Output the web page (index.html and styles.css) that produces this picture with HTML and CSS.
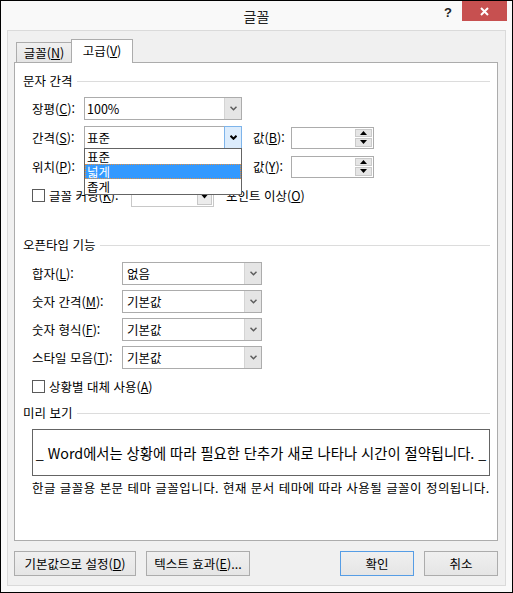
FILE: index.html
```html
<!DOCTYPE html>
<html lang="ko">
<head>
    <meta charset="UTF-8">
    <meta name="viewport" content="width=device-width, initial-scale=1.0">
    <title>글꼴</title>
    <link rel="stylesheet" href="styles.css">
</head>
<body>
    <div class="dialog">
        <div class="titlebar">
            <span class="title">글꼴</span>
            <div class="caption-buttons">
                <span class="help">?</span>
                <span class="close">
                    <svg width="9" height="9" viewBox="0 0 9 9"><path d="M1 1 L8 8 M8 1 L1 8" stroke="#fff" stroke-width="2"/></svg>
                </span>
            </div>
        </div>

        <div class="frame">
            <div class="tabs">
                <div class="tab">글꼴(<u>N</u>)</div>
                <div class="tab active">고급(<u>V</u>)</div>
            </div>

            <div class="page">
                <!-- 문자 간격 -->
                <div class="group-title">문자 간격</div>
                <div class="group">
                    <div class="row">
                        <span class="lbl">장평(<u>C</u>):</span>
                        <div class="combo">
                            <span class="value">100%</span>
                            <span class="drop">
                                <svg width="7" height="5" viewBox="0 0 7 5"><path d="M0.5 0.8 L3.5 3.8 L6.5 0.8" fill="none" stroke="#5c5c5c" stroke-width="1.5"/></svg>
                            </span>
                        </div>
                    </div>
                    <div class="row">
                        <span class="lbl">간격(<u>S</u>):</span>
                        <div class="combo open">
                            <span class="value">표준</span>
                            <span class="drop">
                                <svg width="7" height="5" viewBox="0 0 7 5"><path d="M0.5 0.8 L3.5 3.8 L6.5 0.8" fill="none" stroke="#000" stroke-width="2"/></svg>
                            </span>
                            <ul class="list">
                                <li>표준</li>
                                <li class="selected">넓게</li>
                                <li>좁게</li>
                            </ul>
                        </div>
                        <span class="lbl value-lbl">값(<u>B</u>):</span>
                        <div class="spin">
                            <div class="spin-btns">
                                <span><svg width="7" height="4" viewBox="0 0 7 4"><path d="M0 4 L3.5 0 L7 4 Z" fill="#000"/></svg></span>
                                <span><svg width="7" height="4" viewBox="0 0 7 4"><path d="M0 0 L3.5 4 L7 0 Z" fill="#000"/></svg></span>
                            </div>
                        </div>
                    </div>
                    <div class="row">
                        <span class="lbl">위치(<u>P</u>):</span>
                        <div class="combo">
                            <span class="value">표준</span>
                            <span class="drop"></span>
                        </div>
                        <span class="lbl value-lbl">값(<u>Y</u>):</span>
                        <div class="spin">
                            <div class="spin-btns">
                                <span><svg width="7" height="4" viewBox="0 0 7 4"><path d="M0 4 L3.5 0 L7 4 Z" fill="#000"/></svg></span>
                                <span><svg width="7" height="4" viewBox="0 0 7 4"><path d="M0 0 L3.5 4 L7 0 Z" fill="#000"/></svg></span>
                            </div>
                        </div>
                    </div>
                    <div class="row">
                        <span class="checkbox"></span>
                        <span class="kern-lbl">글꼴 커닝(<u>K</u>):</span>
                        <div class="combo small">
                            <span class="value"></span>
                            <span class="drop">
                                <svg width="7" height="4" viewBox="0 0 7 4"><path d="M0.5 0 L3.5 3.5 L6.5 0 Z" fill="#000"/></svg>
                            </span>
                        </div>
                        <span class="after-lbl">포인트 이상(<u>O</u>)</span>
                    </div>
                </div>

                <!-- 오픈타입 기능 -->
                <div class="group-title second">오픈타입 기능</div>
                <div class="group wide">
                    <div class="row">
                        <span class="lbl">합자(<u>L</u>):</span>
                        <div class="combo">
                            <span class="value">없음</span>
                            <span class="drop"><svg width="7" height="5" viewBox="0 0 7 5"><path d="M0.5 0.8 L3.5 3.8 L6.5 0.8" fill="none" stroke="#5c5c5c" stroke-width="1.5"/></svg></span>
                        </div>
                    </div>
                    <div class="row">
                        <span class="lbl">숫자 간격(<u>M</u>):</span>
                        <div class="combo">
                            <span class="value">기본값</span>
                            <span class="drop"><svg width="7" height="5" viewBox="0 0 7 5"><path d="M0.5 0.8 L3.5 3.8 L6.5 0.8" fill="none" stroke="#5c5c5c" stroke-width="1.5"/></svg></span>
                        </div>
                    </div>
                    <div class="row">
                        <span class="lbl">숫자 형식(<u>F</u>):</span>
                        <div class="combo">
                            <span class="value">기본값</span>
                            <span class="drop"><svg width="7" height="5" viewBox="0 0 7 5"><path d="M0.5 0.8 L3.5 3.8 L6.5 0.8" fill="none" stroke="#5c5c5c" stroke-width="1.5"/></svg></span>
                        </div>
                    </div>
                    <div class="row">
                        <span class="lbl">스타일 모음(<u>T</u>):</span>
                        <div class="combo">
                            <span class="value">기본값</span>
                            <span class="drop"><svg width="7" height="5" viewBox="0 0 7 5"><path d="M0.5 0.8 L3.5 3.8 L6.5 0.8" fill="none" stroke="#5c5c5c" stroke-width="1.5"/></svg></span>
                        </div>
                    </div>
                    <div class="check-row">
                        <span class="checkbox"></span>
                        <span>상황별 대체 사용(<u>A</u>)</span>
                    </div>
                </div>

                <!-- 미리 보기 -->
                <div class="group-title third">미리 보기</div>
                <div class="preview">_ Word에서는 상황에 따라 필요한 단추가 새로 나타나 시간이 절약됩니다. _</div>
                <p class="note">한글 글꼴용 본문 테마 글꼴입니다. 현재 문서 테마에 따라 사용될 글꼴이 정의됩니다.</p>
            </div>

            <div class="footer">
                <button class="btn btn-reset">기본값으로 설정(<u>D</u>)</button>
                <button class="btn btn-effects">텍스트 효과(<u>E</u>)...</button>
                <button class="btn btn-ok">확인</button>
                <button class="btn btn-cancel">취소</button>
            </div>
        </div>
    </div>
</body>
</html>
```

FILE: styles.css
```css
* {
    box-sizing: border-box;
}

body {
    margin: 0;
    font-family: "Noto Sans CJK KR", "Malgun Gothic", sans-serif;
    font-size: 12.5px;
    color: #000;
}

u {
    text-decoration: underline;
    text-underline-offset: 1px;
}

.dialog {
    width: 513px;
    height: 593px;
    border: 1px solid #000;
    background-color: #f9f9f9;
    display: flex;
    flex-direction: column;
}

/* title bar */
.titlebar {
    height: 29px;
    display: grid;
    grid-template-columns: 1fr auto 1fr;
}

.title {
    grid-column: 2;
    font-size: 14px;
    line-height: 31px;
    color: #222;
}

.caption-buttons {
    grid-column: 3;
    justify-self: end;
    display: flex;
    align-items: flex-start;
}

.help {
    font-family: "Liberation Sans", Arial, sans-serif;
    font-weight: bold;
    font-size: 13px;
    line-height: 16px;
    margin-top: 4px;
    margin-right: 10px;
    color: #222;
}

.close {
    width: 45px;
    height: 20px;
    margin-right: 5px;
    background-color: #c75050;
    display: flex;
    align-items: center;
    justify-content: center;
}

/* frame */
.frame {
    flex: 1;
    margin: 0 6px 6px;
    border: 1px solid #dadada;
    background-color: #f0f0f0;
    padding-top: 8px;
    display: flex;
    flex-direction: column;
}

.tabs {
    display: flex;
    align-items: flex-end;
    height: 24px;
    margin-left: 8px;
    margin-bottom: -1px;
    position: relative;
    z-index: 1;
}

.tab {
    width: 55px;
    height: 21px;
    border: 1px solid #acacac;
    border-right: none;
    background: linear-gradient(#f0f0f0, #e5e5e5);
    text-align: center;
    line-height: 19px;
    white-space: nowrap;
}

.tab.active {
    width: 62px;
    height: 24px;
    border-right: 1px solid #acacac;
    border-bottom: none;
    background: #fff;
    line-height: 22px;
}

.page {
    height: 479px;
    margin: 0 7px 0 6px;
    border: 1px solid #acacac;
    background-color: #fff;
    padding: 10px 7px 0 8px;
}

/* group headers */
.group-title {
    display: flex;
    align-items: center;
    height: 16px;
    line-height: 16px;
}

.group-title::after {
    content: "";
    flex: 1;
    margin-left: 4px;
    border-top: 1px solid #dcdcdc;
}

.group-title.second {
    margin-top: 30px;
}

.group-title.third {
    margin-top: 11px;
}

.group {
    margin-top: 8px;
    padding-left: 9px;
}

.group.wide {
    margin-top: 9px;
}

.row {
    display: flex;
    align-items: center;
    height: 23px;
    margin-bottom: 6px;
}

.group.wide .row {
    margin-bottom: 5px;
}

.lbl {
    width: 52px;
    white-space: nowrap;
}

.group.wide .lbl {
    width: 90px;
}

.value-lbl {
    width: 38px;
    margin-left: 11px;
}

/* combo boxes */
.combo {
    position: relative;
    display: flex;
    width: 158px;
    height: 23px;
    border: 1px solid #acacac;
    background-color: #fff;
}

.group.wide .combo {
    width: 140px;
}

.combo .value {
    flex: 1;
    padding-left: 2px;
    line-height: 21px;
}

.group.wide .combo .value {
    padding-left: 4px;
}

.combo .drop {
    width: 17px;
    background-color: #e5e5e5;
    border-left: 1px solid #d4d4d4;
    display: flex;
    align-items: center;
    justify-content: center;
}

.combo.open .drop {
    background-color: #dcecfc;
    border: 1px solid #7eb4ea;
    margin: -1px -1px -1px 0;
    width: 18px;
}

.combo.small {
    width: 83px;
    height: 21px;
    border-color: #c8c8c8;
    margin-top: 2px;
}

.combo.small .drop {
    width: 15px;
    margin: 1px;
    border: 1px solid #c8c8c8;
    background-color: #ececec;
}

.list {
    position: absolute;
    top: 100%;
    left: -1px;
    width: 158px;
    margin: 0;
    padding: 0;
    list-style: none;
    border: 1px solid #646464;
    background-color: #fff;
    z-index: 2;
}

.list li {
    height: 15px;
    line-height: 15px;
    padding-left: 2px;
}

.list li.selected {
    background-color: #3399ff;
    color: #fff;
    outline: 1px dotted #e8913e;
    outline-offset: -1px;
}

/* spin boxes */
.spin {
    width: 83px;
    height: 22px;
    border: 1px solid #acacac;
    background-color: #fff;
    display: flex;
    justify-content: flex-end;
    padding: 1px;
}

.spin-btns {
    width: 17px;
    display: flex;
    flex-direction: column;
    gap: 1px;
}

.spin-btns span {
    flex: 1;
    background-color: #e5e5e5;
    border: 1px solid #cacaca;
    display: flex;
    align-items: center;
    justify-content: center;
}

/* checkboxes */
.checkbox {
    width: 13px;
    height: 13px;
    border: 1px solid #5a5a5a;
    background-color: #fff;
    margin-right: 4px;
    flex-shrink: 0;
}

.kern-lbl {
    width: 82px;
    white-space: nowrap;
}

.after-lbl {
    margin-left: 12px;
}

.check-row {
    display: flex;
    align-items: center;
    height: 15px;
    margin-top: 10px;
}

/* preview */
.preview {
    margin: 8px 0 0 9px;
    height: 47px;
    border: 1px solid #646464;
    display: flex;
    align-items: center;
    justify-content: center;
    font-size: 14.3px;
    white-space: nowrap;
    overflow: hidden;
}

.note {
    margin: 4px 0 0 9px;
    line-height: 16px;
    letter-spacing: 0.45px;
    white-space: nowrap;
}

/* buttons */
.footer {
    display: flex;
    margin-top: 10px;
    padding: 0 7px 0 6px;
}

.btn {
    height: 25px;
    border: 1px solid #acacac;
    background: linear-gradient(#f0f0f0, #e5e5e5);
    font-family: inherit;
    font-size: 12.5px;
    color: #000;
    padding: 0;
}

.btn-reset {
    width: 122px;
}

.btn-effects {
    width: 104px;
    margin-left: 10px;
}

.btn-ok {
    width: 74px;
    margin-left: auto;
    border-color: #569de5;
}

.btn-cancel {
    width: 74px;
    margin-left: 10px;
}
```
